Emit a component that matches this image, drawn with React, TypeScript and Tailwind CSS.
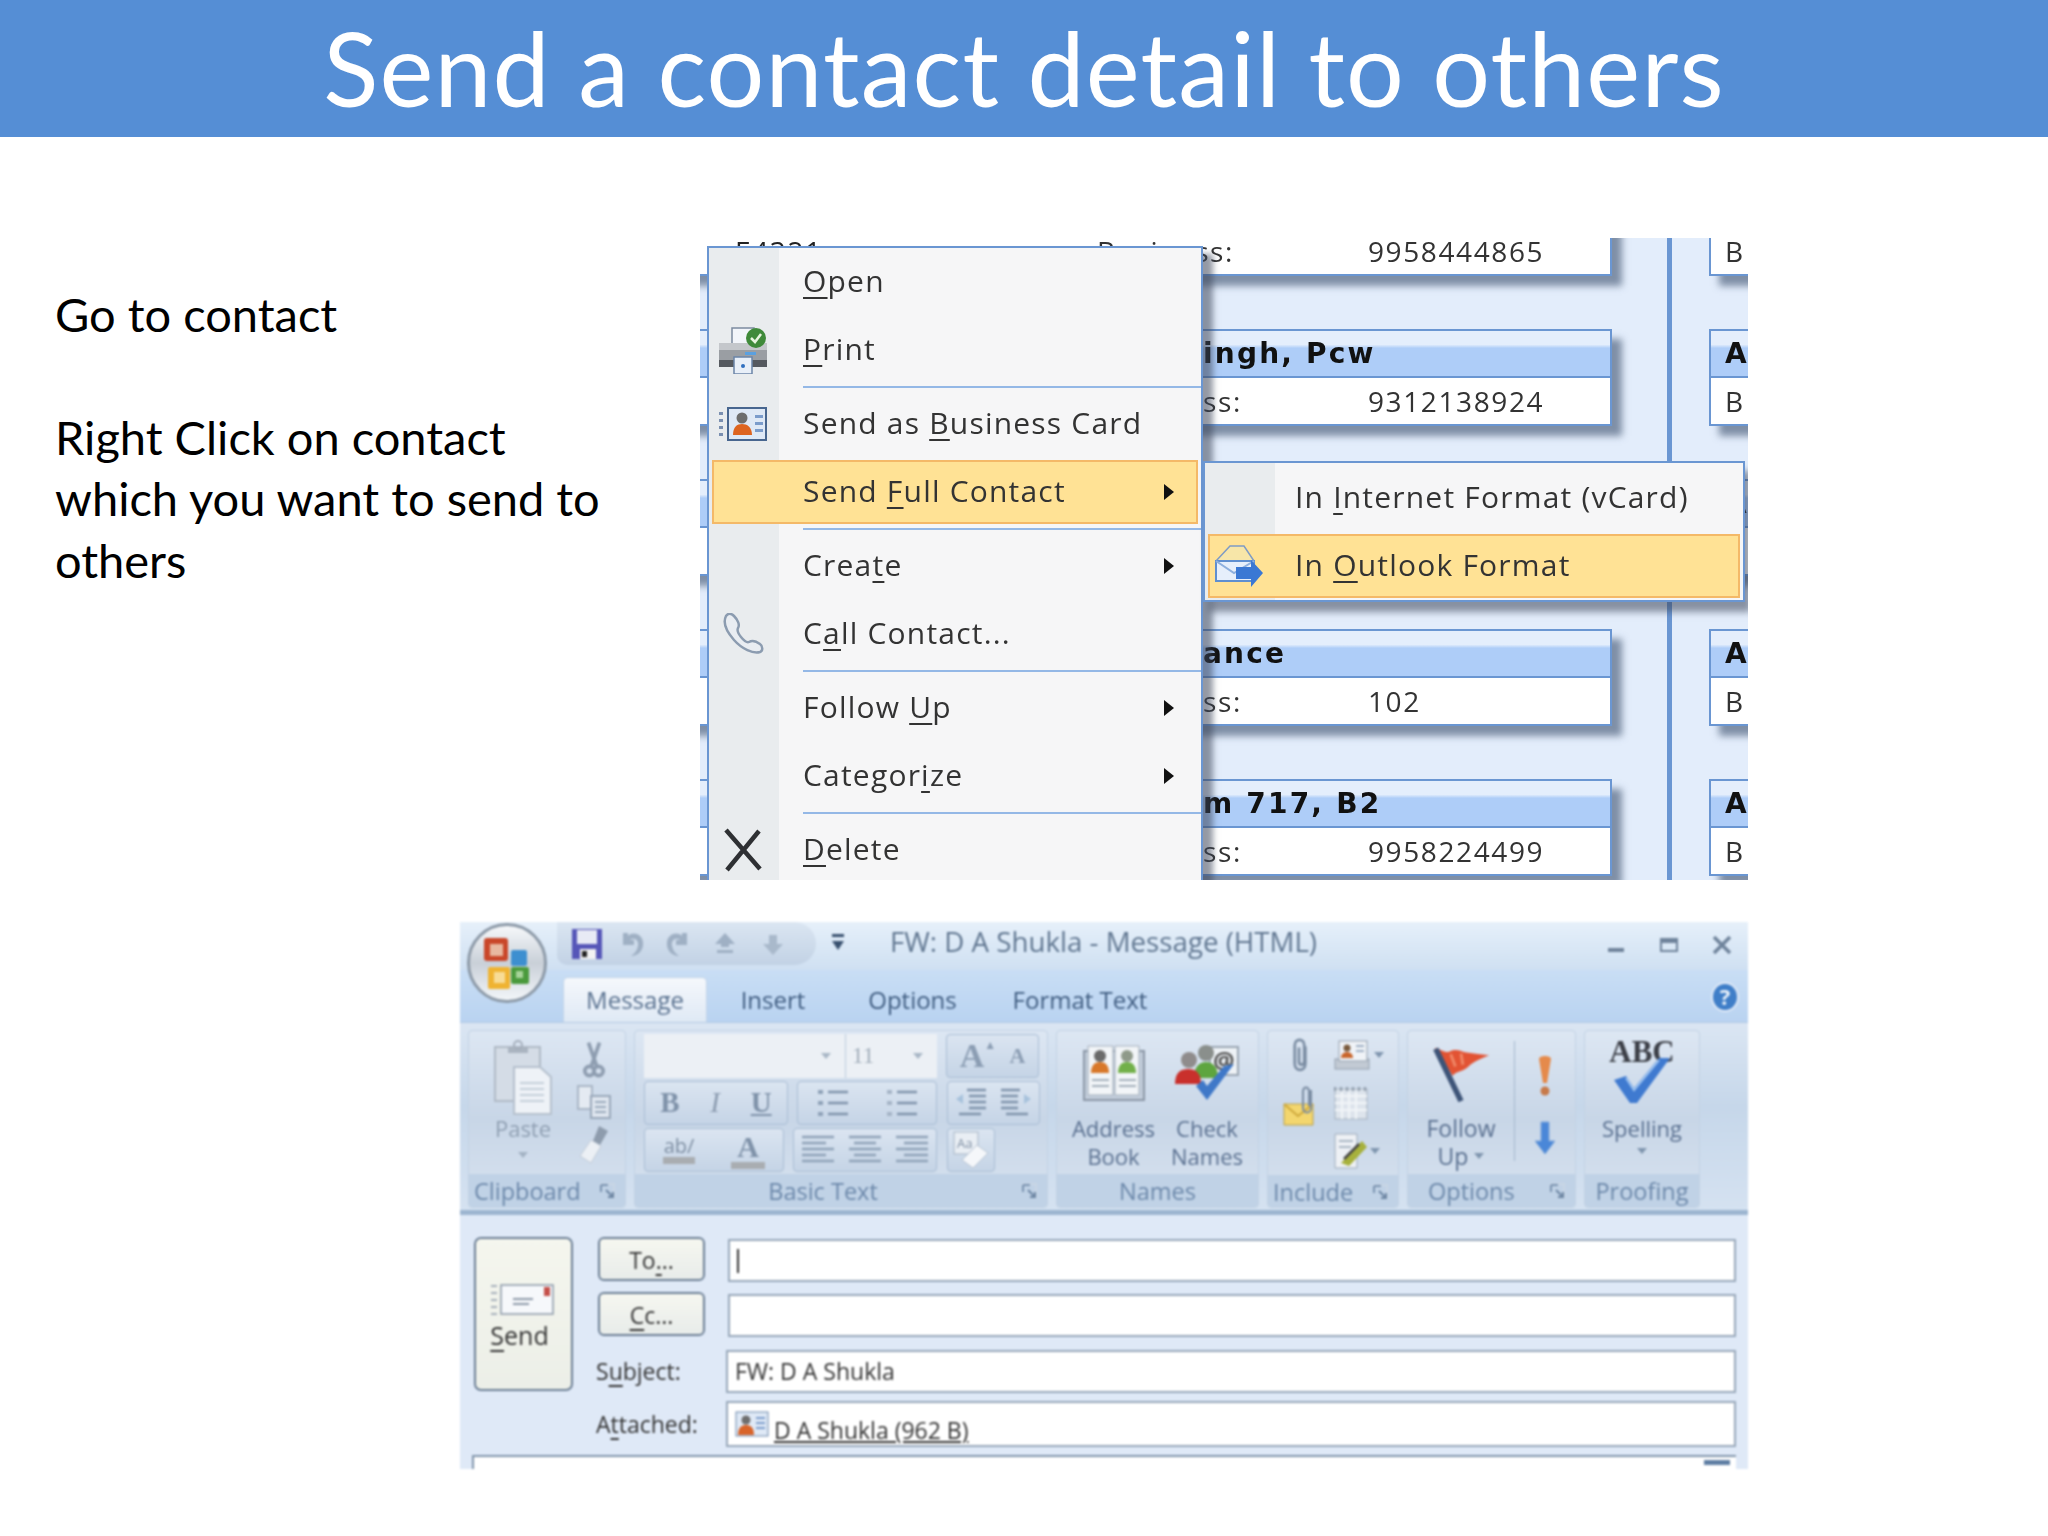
import React from "react";

const Tri = ({ cls = "fill-[#111]" }: { cls?: string }) => (
  <svg width="12" height="16" viewBox="0 0 12 16" className={cls}><path d="M1 0 L11 8 L1 16 Z" /></svg>
);
const Drop = ({ c = "#7f95ae" }: { c?: string }) => (
  <svg width="10" height="6" viewBox="0 0 10 6"><path d="M0 0H10L5 6Z" fill={c} /></svg>
);

const Mn = ({ children }: { children: React.ReactNode }) => (
  <span className="underline decoration-2 underline-offset-[5px]">{children}</span>
);

const PrinterIcon = () => (
  <svg width="50" height="48" viewBox="0 0 50 48">
    <path d="M14 2H36V22H14Z" fill="#f2f5fa" stroke="#7c8aa0" strokeWidth="1.5" />
    <path d="M1 17H49V37H1Z" fill="#9a9ea3" />
    <path d="M1 17H49V24H1Z" fill="#c4c7cb" />
    <path d="M27 26H38V29H27Z" fill="#5aa0e0" />
    <path d="M1 34H49V41H1Z" fill="#55595f" />
    <path d="M16 31H34V48H16Z" fill="#e8eff8" stroke="#6b85a8" strokeWidth="1.5" />
    <circle cx="25" cy="40" r="2" fill="#2f6fc0" />
    <circle cx="38" cy="12" r="10" fill="#3f8a3a" />
    <path d="M33 12L37 16L43 8" fill="none" stroke="#e8f5e0" strokeWidth="2.5" />
  </svg>
);
const CardIcon = () => (
  <svg width="48" height="34" viewBox="0 0 48 34">
    <g fill="#7a8fb0"><rect x="0" y="5" width="4" height="3" /><rect x="0" y="12" width="4" height="3" /><rect x="0" y="19" width="4" height="3" /><rect x="0" y="26" width="4" height="3" /></g>
    <rect x="9" y="1" width="38" height="32" fill="#dfe9f6" stroke="#48668f" strokeWidth="2" />
    <circle cx="23" cy="11" r="5.5" fill="#6d6d6d" />
    <path d="M14 28C14 20 18 17 23 17C28 17 33 20 33 28Z" fill="#dd6420" />
    <g fill="#7b9ccb"><rect x="36" y="8" width="8" height="3" /><rect x="36" y="15" width="8" height="3" /><rect x="36" y="22" width="8" height="3" /></g>
  </svg>
);
const PhoneIcon = () => (
  <svg width="42" height="42" viewBox="0 0 42 42" fill="none">
    <path d="M4 3C1 9 4 18 12 27C20 36 31 41 38 39C41 38 41 33 38 31C34 28 30 27 27 29C25 30 23 29 19 24C15 19 15 17 16 15C18 12 16 7 12 3C9 0 6 0 4 3Z" fill="#e9edf2" stroke="#8c9cb0" strokeWidth="2.5" />
  </svg>
);
const XIcon = () => (
  <svg width="40" height="44" viewBox="0 0 40 44"><path d="M3 2L37 41M36 3L4 42" stroke="#2e3033" strokeWidth="4.5" fill="none" /></svg>
);
const MailArrowIcon = () => (
  <svg width="50" height="46" viewBox="0 0 50 46">
    <path d="M2 18L16 3H30L40 18V38H2Z" fill="#f7e6a8" stroke="#7f9cc5" strokeWidth="1.5" />
    <path d="M2 18H40V38H2Z" fill="#e6effb" stroke="#5f8fd0" strokeWidth="2" />
    <path d="M2 18L20 30L40 18" fill="none" stroke="#8eb0de" strokeWidth="2" />
    <path d="M22 24H37V17L49 30L37 44V36H22Z" fill="#3a78d4" />
  </svg>
);

function Row({ icon, children, arrow, active, sub }: { icon?: React.ReactNode; children: React.ReactNode; arrow?: boolean; active?: boolean; sub?: boolean }) {
  return (
    <div className="h-[68px] px-[3px] flex items-center">
      <div className={active ? "w-full h-[64px] flex items-center border-2 border-[#f4b968] bg-[#ffe295]" : "w-full h-[64px] flex items-center border-2 border-transparent"}>
        <div className="w-[58px] flex items-center justify-center">{icon}</div>
        <span className={sub ? "ml-[27px] pb-[3px] tracking-[1.2px] text-[30px] leading-none text-[#333]" : "ml-[31px] pb-[3px] tracking-[1.2px] text-[30px] leading-none text-[#333]"}>{children}</span>
        {arrow && <span className="ml-auto mr-[21px] flex"><Tri /></span>}
      </div>
    </div>
  );
}
const Sep = () => (
  <div className="h-[6px] pl-[94px] flex items-center"><div className="h-[2px] w-full bg-[#94b8e6]" /></div>
);

const headers = [
  { h: "", l: "", n: "9958444865", first: true },
  { h: "ingh, Pcw", l: "ss:", n: "9312138924" },
  { h: "", l: "ss:", n: "" },
  { h: "ance", l: "ss:", n: "102" },
  { h: "m 717, B2", l: "ss:", n: "9958224499" },
];

function ContactCard({ h, l, n, first }: { h: string; l: string; n: string; first?: boolean }) {
  return (
    <div className="w-[962px] h-[97px] shrink-0 border-2 border-[#6a96d2] bg-white shadow-[10px_10px_7px_rgba(60,80,110,0.6)] flex flex-col">
      <div className="h-[47px] border-b-2 border-[#6a96d2] bg-[linear-gradient(to_bottom,#e4eefc_0%,#e4eefc_30%,#aecdf8_38%,#aecdf8_100%)] pl-[551px] flex items-center font-['DejaVu_Sans',sans-serif] font-bold text-[28px] tracking-[2.2px] text-[#111]">
        {h}
      </div>
      <div className="flex-1 flex items-center font-['Open_Sans',sans-serif] text-[28px] tracking-[1.6px] text-[#333]">
        {first ? (
          <>
            <span className="ml-[83px] w-[245px] text-[#222]">E4321</span>
            <span className="w-[54px] h-[10px] self-start bg-[linear-gradient(to_right,#aeb6c2,#dfe8f5)]" />
            <span className="w-[4px] h-[10px] self-start bg-[#6a96d2]" />
            <span className="w-[38px] h-[10px] self-start bg-[#dbe7f8]" />
            <span className="w-[2px] h-[10px] self-start bg-[#6a96d2]" />
            <span className="ml-[19px] w-[271px]">Business:</span>
          </>
        ) : (
          <span className="pl-[551px] w-[716px]">{l}</span>
        )}
        <span>{n}</span>
      </div>
    </div>
  );
}
function SideCard({ first }: { first?: boolean }) {
  return (
    <div className="w-[70px] h-[97px] shrink-0 border-2 border-[#6a96d2] bg-white shadow-[10px_10px_7px_rgba(60,80,110,0.6)] flex flex-col">
      <div className="h-[47px] border-b-2 border-[#6a96d2] bg-[linear-gradient(to_bottom,#e4eefc_0%,#e4eefc_30%,#aecdf8_38%,#aecdf8_100%)] pl-[14px] flex items-center font-['DejaVu_Sans',sans-serif] font-bold text-[28px] text-[#111]">
        {first ? "" : "A"}
      </div>
      <div className="flex-1 pl-[14px] flex items-center font-['Open_Sans',sans-serif] text-[28px] text-[#333]">B</div>
    </div>
  );
}

function ContactsShot() {
  return (
    <div className="relative w-[1048px] h-[642px] overflow-hidden bg-[#e3edfb] blur-[0.6px] font-['Open_Sans',sans-serif]">
      <div className="flex -mt-[59px]">
        <div className="-ml-[50px] shrink-0 flex flex-col gap-[53px]">
          {headers.map((c, i) => <ContactCard key={i} {...c} />)}
        </div>
        <div className="ml-[55px] shrink-0 w-[5px] h-[800px] bg-[#6a96d2]" />
        <div className="ml-[37px] shrink-0 flex flex-col gap-[53px]">
          {headers.map((c, i) => <SideCard key={i} first={i === 0} />)}
        </div>
      </div>

      <div className="absolute left-[7px] top-[8px] w-[496px] h-[700px] border-2 border-[#6a96d2] shadow-[10px_8px_6px_rgba(60,70,90,0.55)] bg-[linear-gradient(to_right,#e9ecee_70px,#f6f6f7_70px)] z-10">
        <Row><Mn>O</Mn>pen</Row>
        <Row icon={<PrinterIcon />}><Mn>P</Mn>rint</Row>
        <Sep />
        <Row icon={<CardIcon />}>Send as <Mn>B</Mn>usiness Card</Row>
        <Row active arrow>Send <Mn>F</Mn>ull Contact</Row>
        <Sep />
        <Row arrow>Crea<Mn>t</Mn>e</Row>
        <Row icon={<PhoneIcon />}>C<Mn>a</Mn>ll Contact...</Row>
        <Sep />
        <Row arrow>Follow <Mn>U</Mn>p</Row>
        <Row arrow>Categor<Mn>i</Mn>ze</Row>
        <Sep />
        <Row icon={<XIcon />}><Mn>D</Mn>elete</Row>
      </div>

      <div className="absolute left-[503px] top-[223px] w-[542px] h-[141px] border-2 border-[#6a96d2] shadow-[6px_10px_7px_rgba(60,70,90,0.55)] pt-[1px] bg-[linear-gradient(to_right,#e9ecee_70px,#f6f6f7_70px)] z-20">
        <Row sub>In <Mn>I</Mn>nternet Format (vCard)</Row>
        <Row sub active icon={<MailArrowIcon />}>In <Mn>O</Mn>utlook Format</Row>
      </div>
    </div>
  );
}

/* ---------- Ribbon icons ---------- */
const Orb = () => (
  <svg width="82" height="82" viewBox="0 0 82 82">
    <defs>
      <linearGradient id="orbg" x1="0" y1="0" x2="0" y2="1"><stop offset="0" stopColor="#f8fafc" /><stop offset="0.5" stopColor="#c9d0d8" /><stop offset="1" stopColor="#f4f7fa" /></linearGradient>
    </defs>
    <circle cx="41" cy="41" r="38.5" fill="url(#orbg)" stroke="#8d9aa8" strokeWidth="3" />
    <rect x="18" y="16" width="24" height="23" rx="3" fill="#c9472a" />
    <rect x="24" y="22" width="13" height="12" fill="#e8b8a0" />
    <rect x="45" y="28" width="16" height="16" rx="2" fill="#3d8fd0" />
    <rect x="22" y="45" width="22" height="22" rx="2" fill="#efb332" />
    <rect x="28" y="50" width="11" height="11" fill="#f8dc96" />
    <rect x="45" y="45" width="18" height="17" rx="2" fill="#4a9a3c" />
    <rect x="50" y="49" width="7" height="7" fill="#a8d49a" />
  </svg>
);
const SaveIcon = () => (
  <svg width="32" height="32" viewBox="0 0 32 32"><path d="M1 1H31V31H1Z" fill="#5656b8" /><path d="M6 2H26V16H6Z" fill="#e8eaf5" /><path d="M9 21H25V31H9Z" fill="#f2f2f2" /><path d="M11 23H16V29H11Z" fill="#222" /></svg>
);
const UndoIcon = ({ flip }: { flip?: boolean }) => (
  <svg width="26" height="30" viewBox="0 0 26 30" className={flip ? "-scale-x-100" : ""}><path d="M4 4V16H15V11H11C15 8 20 11 19 17C18 22 15 25 12 27C20 27 25 20 24 13C23 5 14 2 9 7L9 4Z" fill="#9fb0c4" /></svg>
);
const UpIcon = () => (<svg width="26" height="26" viewBox="0 0 26 26"><path d="M13 2L23 13H17V16H9V13H3Z M5 19H21V22H5Z" fill="#9fb0c4" /></svg>);
const DownIcon = () => (<svg width="26" height="26" viewBox="0 0 26 26"><path d="M13 24L23 13H17V4H9V13H3Z" fill="#a9b9cb" /></svg>);
const QatMore = () => (<svg width="14" height="20" viewBox="0 0 14 20"><path d="M1 1H13V4H1Z M1 8H13L7 17Z" fill="#39516f" /></svg>);
const Launcher = () => (
  <svg width="16" height="16" viewBox="0 0 16 16" fill="none"><path d="M1 1H15V15" stroke="#c9d6e5" strokeWidth="2" /><path d="M2 2H9" stroke="#7a93b0" strokeWidth="2" /><path d="M2 2V9" stroke="#7a93b0" strokeWidth="2" /><path d="M7 7L14 14M14 9V14H9" stroke="#6d86a3" strokeWidth="2" /></svg>
);
const PasteIcon = () => (
  <svg width="58" height="76" viewBox="0 0 58 76">
    <path d="M1 8H46V62H1Z" fill="#d4dce6" stroke="#b0bac6" strokeWidth="2" />
    <path d="M14 8H34V14H14Z" fill="#aab4c0" /><circle cx="24" cy="6" r="4" fill="none" stroke="#a5afbc" strokeWidth="2" />
    <path d="M20 28H46L57 38V75H20Z" fill="#eef2f7" stroke="#b5c0cd" strokeWidth="2" />
    <path d="M26 44H50M26 50H50M26 56H50M26 62H50" stroke="#c5cfda" strokeWidth="2" />
  </svg>
);
const CutIcon = () => (<svg width="22" height="38" viewBox="0 0 24 40" fill="none" stroke="#8e9db0" strokeWidth="4"><path d="M6 1L15 27M18 1L9 27" /><circle cx="7" cy="32" r="5" /><circle cx="17" cy="32" r="5" /></svg>);
const CopyIcon = () => (<svg width="34" height="34" viewBox="0 0 34 34"><path d="M1 1H15V24H1Z" fill="#e4eaf2" stroke="#a9b6c6" strokeWidth="2" /><path d="M14 11H33V33H14Z" fill="#dfe6ef" stroke="#99a8ba" strokeWidth="2" /><path d="M18 17H29M18 22H29M18 27H29" stroke="#9aaabc" strokeWidth="2" /></svg>);
const BrushIcon = () => (<svg width="30" height="40" viewBox="0 0 30 40"><path d="M20 1L29 6L21 20L14 16Z" fill="#8e9cad" /><path d="M12 15L22 21L12 38L1 31Z" fill="#ecf0f5" stroke="#c2ccd8" strokeWidth="1" /></svg>);
const Lines = ({ w = 32, rows }: { w?: number; rows: [number, number, number][] }) => (
  <svg width={w} height="34" viewBox={`0 0 ${w} 34`} stroke="#8fa2b8" strokeWidth="2.5">
    {rows.map((r, i) => <line key={i} x1={r[0]} x2={r[1]} y1={r[2]} y2={r[2]} />)}
  </svg>
);
const BulletIcon = ({ n }: { n?: boolean }) => (
  <svg width="32" height="34" viewBox="0 0 32 34">
    <g fill={n ? "#a5b4c6" : "#8fa2b8"}><rect x="1" y="4" width="5" height="4" /><rect x="1" y="15" width="5" height="4" /><rect x="1" y="26" width="5" height="4" /></g>
    <g stroke="#7f93ab" strokeWidth="2.5"><line x1="11" x2="31" y1="6" y2="6" /><line x1="11" x2="31" y1="17" y2="17" /><line x1="11" x2="31" y1="28" y2="28" /></g>
  </svg>
);
const IndentIcon = ({ flip }: { flip?: boolean }) => (
  <svg width="32" height="34" viewBox="0 0 32 34" className={flip ? "-scale-x-100" : ""}>
    <g stroke="#7f93ab" strokeWidth="2.5"><line x1="12" x2="31" y1="4" y2="4" /><line x1="14" x2="31" y1="10" y2="10" /><line x1="14" x2="31" y1="16" y2="16" /><line x1="14" x2="31" y1="22" y2="22" /><line x1="4" x2="26" y1="28" y2="28" /></g>
    <path d="M1 13L8 8V18Z" fill="#a7c2dc" />
  </svg>
);
const EraserIcon = () => (
  <svg width="36" height="38" viewBox="0 0 36 38">
    <rect x="1" y="1" width="24" height="22" fill="#e9eef4" stroke="#a8b6c6" />
    <text x="4" y="17" fontSize="13" fontFamily="Open Sans" fill="#7f8fa3">Aa</text>
    <path d="M24 14L35 22L20 37L9 29Z" fill="#f5f7fa" stroke="#b8c4d2" />
  </svg>
);
const AddressBookIcon = () => (
  <svg width="62" height="56" viewBox="0 0 62 56">
    <path d="M1 6H61V55H1Z" fill="#c2cddb" stroke="#8b97a6" strokeWidth="2" />
    <path d="M5 1H30V50H5Z M32 1H56V50H32Z" fill="#f2f5f8" stroke="#a4afbb" />
    <circle cx="17" cy="11" r="6" fill="#6a6a6a" /><path d="M8 28C8 20 12 17 17 17C22 17 26 20 26 28Z" fill="#d8782a" />
    <circle cx="44" cy="11" r="6" fill="#8f9a8a" /><path d="M35 28C35 20 39 17 44 17C49 17 53 20 53 28Z" fill="#72b04a" />
    <path d="M9 35H26M9 41H26M36 35H53M36 41H53" stroke="#a4afbb" strokeWidth="2" />
  </svg>
);
const CheckNamesIcon = () => (
  <svg width="66" height="62" viewBox="0 0 66 62">
    <rect x="36" y="5" width="28" height="28" fill="#eef2f6" stroke="#9aa6b3" strokeWidth="2" />
    <text x="39" y="27" fontSize="24" fontFamily="Open Sans" fontWeight="700" fill="#555">@</text>
    <circle cx="32" cy="11" r="8" fill="#8a8f8c" /><path d="M20 36C20 25 25 20 32 20C39 20 44 25 44 36Z" fill="#5ea53f" />
    <circle cx="15" cy="18" r="8" fill="#8f8c8c" /><path d="M1 42C1 30 7 27 14 27C22 27 27 31 27 42Z" fill="#c9302c" />
    <path d="M22 44L33 58L60 22L50 24L33 44L29 38Z" fill="#3f78c8" />
  </svg>
);
const ClipIcon = ({ s = 32 }: { s?: number }) => (
  <svg width={s * 0.65} height={s} viewBox="0 0 20 32" fill="none" stroke="#7a8ca2" strokeWidth="2.5"><path d="M15 8V24C15 32 5 32 5 24V7C5 0 14 0 14 7V22C14 26 9 26 9 22V9" /></svg>
);
const VCardIcon = () => (
  <svg width="36" height="30" viewBox="0 0 36 30"><rect x="1" y="19" width="34" height="10" fill="#c2cad4" stroke="#93a0ae" /><rect x="5" y="1" width="28" height="20" fill="#f0f3f7" stroke="#93a0ae" /><circle cx="13" cy="8" r="3.5" fill="#7a5a3c" /><path d="M7 18C7 14 10 12 13 12C16 12 19 14 19 18Z" fill="#c9662c" /><path d="M22 6H30M22 11H30" stroke="#9dafc4" strokeWidth="2" /></svg>
);
const MailClipIcon = () => (
  <svg width="34" height="40" viewBox="0 0 34 40"><path d="M1 18H30V39H1Z" fill="#f3d66e" stroke="#b9a14c" /><path d="M1 18L15 30L30 18" fill="none" stroke="#cfa93c" strokeWidth="2" /><g transform="translate(18 0)"><path d="M10 4V22C10 28 2 28 2 22V6C2 0 8 0 8 6V20" fill="none" stroke="#7a8ca2" strokeWidth="2" /></g></svg>
);
const CalIcon = () => (
  <svg width="34" height="34" viewBox="0 0 34 34"><rect x="1" y="3" width="32" height="30" fill="#dde4ec" stroke="#a3afbd" /><path d="M1 1V5M7 1V5M13 1V5M19 1V5M25 1V5M31 1V5" stroke="#8e9bab" strokeWidth="2" /><path d="M1 10H33M1 17H33M1 24H33M8 6V33M15 6V33M22 6V33" stroke="#f2f5f8" strokeWidth="2" /></svg>
);
const SigIcon = () => (
  <svg width="34" height="36" viewBox="0 0 34 36"><path d="M1 1H23V35H1Z" fill="#eef1f5" stroke="#9dabba" /><path d="M5 8H19M5 14H17" stroke="#a9b6c4" strokeWidth="2" /><path d="M7 30L28 8L33 14L15 33Z" fill="#a7b13c" /><path d="M10 26L25 11" stroke="#444" strokeWidth="2.5" /></svg>
);
const FlagIcon = () => (
  <svg width="58" height="58" viewBox="0 0 62 62">
    <path d="M3 3C10 5 14 9 19 7C26 3 31 7 37 8C45 9 53 10 61 11C52 15 45 17 39 23C33 29 27 27 22 33L3 3Z" fill="#e25333" />
    <path d="M20 10L25 23M31 9L33 21" stroke="#f08968" strokeWidth="3" />
    <path d="M4 4L31 60" stroke="#3d5478" strokeWidth="6" />
  </svg>
);
const Bang = () => (
  <svg width="16" height="42" viewBox="0 0 16 42"><path d="M2 4C2 0 14 0 14 4L10 28H6Z" fill="#e58a4b" /><circle cx="8" cy="36" r="4.5" fill="#c77a4a" /></svg>
);
const LowArrow = () => (
  <svg width="20" height="34" viewBox="0 0 20 34"><path d="M6 1H14V20H20L10 33L0 20H6Z" fill="#4a87d8" stroke="#7ea5d8" /></svg>
);
const SpellCheck = () => (
  <svg width="58" height="46" viewBox="0 0 58 46"><path d="M1 22L13 18L21 30L46 0L57 0L24 45H17Z" fill="#3f7ad0" /><path d="M13 20L21 32L46 2" fill="none" stroke="#9dc3f0" strokeWidth="2" /></svg>
);
const SendEnv = () => (
  <svg width="64" height="32" viewBox="0 0 64 32">
    <g fill="#a7b0bb"><rect x="0" y="1" width="6" height="2" /><rect x="0" y="8" width="6" height="2" /><rect x="0" y="15" width="6" height="2" /><rect x="0" y="22" width="6" height="2" /><rect x="0" y="29" width="6" height="2" /></g>
    <rect x="10" y="1" width="52" height="29" fill="#f6f8fb" stroke="#8b98a8" strokeWidth="1.5" />
    <rect x="53" y="3" width="6" height="9" fill="#c5504a" />
    <path d="M22 15H42M22 20H38" stroke="#8d99a8" strokeWidth="2" />
  </svg>
);

const Group = ({ w, label, launcher, children, labelCls = "justify-center" }: { w: string; label: string; launcher?: boolean; children: React.ReactNode; labelCls?: string }) => (
  <div className={`${w} h-[178px] rounded-[4px] border border-[#c2d2e4] flex flex-col bg-[linear-gradient(to_bottom,#dde7f3_0%,#c8d6e7_50%,#d8e3f0_100%)] font-['Open_Sans',sans-serif] overflow-hidden`}>
    <div className="h-[145px] flex">{children}</div>
    <div className={`h-[33px] pt-[2px] bg-[#c0d2e6] relative flex items-center ${labelCls} text-[23.5px] text-[#6c88aa]`}>
      <span>{label}</span>
      {launcher && <span className="absolute right-[10px] top-[9px] flex"><Launcher /></span>}
    </div>
  </div>
);
const Btns = ({ w, cls = "justify-around", children }: { w: string; cls?: string; children: React.ReactNode }) => (
  <div className={`${w} h-[44px] flex items-center ${cls} rounded-[4px] border border-[#a9bdd4] bg-[linear-gradient(to_bottom,#dbe5f1,#c5d4e6)]`}>{children}</div>
);

function OutlookShot() {
  return (
    <div className="relative w-[1288px] h-[547px] overflow-hidden blur-[0.8px] bg-[#dfe9f7] font-['Open_Sans',sans-serif]">
      {/* Title bar */}
      <div className="h-[48px] flex items-start bg-[linear-gradient(to_bottom,#e6f0fa,#cfe0f2)]">
        <div className="ml-[97px] w-[259px] h-[43px] rounded-r-[30px] rounded-bl-[14px] bg-[linear-gradient(to_bottom,#dbe6f2,#c2d2e5)] flex items-center">
          <span className="ml-[14px] flex"><SaveIcon /></span>
          <span className="ml-[16px] flex"><UndoIcon /></span>
          <span className="ml-[20px] flex"><UndoIcon flip /></span>
          <span className="ml-[21px] flex"><UpIcon /></span>
          <span className="ml-[22px] flex"><DownIcon /></span>
        </div>
        <span className="ml-[15px] mt-[11px] flex"><QatMore /></span>
        <span className="ml-[45px] -mt-[3px] text-[27.7px] leading-[44px] text-[#617791] whitespace-nowrap">FW: D A Shukla - Message (HTML)</span>
        <div className="ml-auto flex h-[46px]">
          <span className="w-[53px] flex items-center justify-center"><span className="mt-[10px] w-[16px] h-[4px] bg-[#6f839b]" /></span>
          <span className="w-[53px] flex items-center justify-center"><span className="w-[18px] h-[14px] border-2 border-t-[5px] border-[#6f839b]" /></span>
          <span className="w-[53px] flex items-center justify-center">
            <svg width="20" height="20" viewBox="0 0 20 20"><path d="M2 2L18 18M18 2L2 18" stroke="#6f839b" strokeWidth="3.5" /></svg>
          </span>
        </div>
      </div>
      <div className="absolute left-[6px] top-[0px] z-10"><Orb /></div>

      {/* Tabs */}
      <div className="h-[53px] flex items-end pl-[103px] pr-[9px] border-b border-[#b3c9e2] bg-[linear-gradient(to_bottom,#c9def5,#b9d3f1)] text-[24px] text-[#3f5c80]">
        <div className="w-[144px] h-[45px] rounded-t-[5px] border border-b-0 border-[#c2d4e8] bg-[linear-gradient(to_bottom,#f5f8fc,#dfe9f5)] flex items-center justify-center text-[#59718f]">Message</div>
        <div className="w-[132px] h-[45px] flex items-center justify-center">Insert</div>
        <div className="w-[147px] h-[45px] flex items-center justify-center">Options</div>
        <div className="w-[188px] h-[45px] flex items-center justify-center">Format Text</div>
        <div className="ml-auto self-center flex mt-[2px]">
          <svg width="28" height="30" viewBox="0 0 28 30">
            <ellipse cx="14" cy="15" rx="13" ry="14" fill="#3f7ec8" stroke="#dfe9f7" strokeWidth="2" />
            <text x="14" y="23" textAnchor="middle" fontSize="22" fontWeight="700" fontFamily="Open Sans" fill="#eef5fc">?</text>
          </svg>
        </div>
      </div>

      {/* Ribbon */}
      <div className="h-[192px] pt-[7px] pl-[8px] flex gap-[8px] bg-[linear-gradient(to_bottom,#dbe6f3,#c6d7ea_45%,#d5e2f1)] border-b-[5px] border-[#9cb5d0]">
        <Group w="w-[158px]" label="Clipboard" launcher labelCls="justify-start pl-[5px]">
          <div className="w-[108px] flex flex-col items-center pt-[8px]">
            <PasteIcon />
            <span className="-mt-[2px] text-[22px] leading-[30px] text-[#8f9fb2]">Paste</span>
            <span className="mt-[9px] flex"><Drop c="#a3b2c3" /></span>
          </div>
          <div className="w-[34px] flex flex-col items-center pt-[10px] gap-[6px]">
            <CutIcon /><CopyIcon /><BrushIcon />
          </div>
        </Group>

        <Group w="w-[414px]" label="Basic Text" launcher labelCls="justify-center pr-[36px]">
          <div className="pl-[9px] pt-[3px] flex flex-col gap-[3px]">
            <div className="flex">
              <div className="w-[202px] h-[44px] bg-[#ecf0f5] border-r border-[#bccbdc] flex items-center justify-end pr-[14px]"><Drop c="#a9b7c6" /></div>
              <div className="w-[91px] h-[44px] bg-[#ecf0f5] flex items-center justify-between px-[6px] pr-[14px] font-['Liberation_Serif',serif] text-[23px] text-[#a2aebb]">11<Drop c="#a9b7c6" /></div>
              <div className="ml-[9px]"><Btns w="w-[93px]">
                <span className="relative font-['Liberation_Serif',serif] font-bold text-[34px] leading-none text-[#8b9db3]">A<span className="absolute -right-[12px] top-0 text-[12px]">▲</span></span>
                <span className="font-['Liberation_Serif',serif] font-bold text-[22px] leading-none text-[#8b9db3]">A</span>
              </Btns></div>
            </div>
            <div className="flex">
              <Btns w="w-[144px]">
                <span className="font-['Liberation_Serif',serif] font-bold text-[29px] text-[#7f92a9]">B</span>
                <span className="font-['Liberation_Serif',serif] italic text-[29px] text-[#8c9cb0]">I</span>
                <span className="font-['Liberation_Serif',serif] font-bold underline text-[29px] text-[#7f92a9]">U</span>
              </Btns>
              <div className="ml-[9px]"><Btns w="w-[140px]"><BulletIcon /><BulletIcon n /></Btns></div>
              <div className="ml-[10px]"><Btns w="w-[93px]"><IndentIcon /><IndentIcon flip /></Btns></div>
            </div>
            <div className="flex">
              <Btns w="w-[140px]">
                <span className="flex flex-col items-center leading-none text-[20px] text-[#7f8fa3]">ab/<span className="mt-[1px] w-[32px] h-[7px] bg-[#a9adb1]" /></span>
                <span className="flex flex-col items-center font-['Liberation_Serif',serif] font-bold text-[30px] leading-[30px] text-[#7f92a9]">A<span className="w-[34px] h-[7px] bg-[#a9adb1]" /></span>
              </Btns>
              <div className="ml-[9px]"><Btns w="w-[144px]">
                <Lines rows={[[0, 32, 4], [0, 24, 10], [0, 32, 16], [0, 24, 22], [0, 32, 28]]} />
                <Lines rows={[[0, 32, 4], [5, 27, 10], [0, 32, 16], [5, 27, 22], [0, 32, 28]]} />
                <Lines rows={[[0, 32, 4], [8, 32, 10], [0, 32, 16], [8, 32, 22], [0, 32, 28]]} />
              </Btns></div>
              <div className="ml-[10px]"><Btns w="w-[48px]" cls="justify-center"><EraserIcon /></Btns></div>
            </div>
          </div>
        </Group>

        <Group w="w-[203px]" label="Names">
          <div className="w-[113px] flex flex-col items-center text-[22px] leading-[28px] text-[#5a7090]">
            <div className="h-[83px] flex items-center"><AddressBookIcon /></div>
            <span>Address</span><span>Book</span>
          </div>
          <div className="w-[74px] flex flex-col items-center text-[22px] leading-[28px] text-[#5a7090]">
            <div className="h-[83px] flex items-center"><CheckNamesIcon /></div>
            <span>Check</span><span>Names</span>
          </div>
        </Group>

        <Group w="w-[132px]" label="Include" launcher labelCls="justify-start pl-[5px]">
          <div className="grid grid-cols-[64px_67px] grid-rows-[48px_48px_48px]">
            <div className="flex items-center justify-center"><ClipIcon s={34} /></div>
            <div className="flex items-center gap-[4px] pl-[2px]"><VCardIcon /><Drop /></div>
            <div className="flex items-center justify-center pt-[6px]"><MailClipIcon /></div>
            <div className="flex items-center pl-[2px]"><CalIcon /></div>
            <div />
            <div className="flex items-center gap-[2px] pl-[2px]"><SigIcon /><Drop /></div>
          </div>
        </Group>

        <Group w="w-[169px]" label="Options" launcher labelCls="justify-start pl-[20px]">
          <div className="w-[106px] flex flex-col items-center text-[23px] leading-[28px] text-[#5a7090]">
            <div className="h-[83px] flex items-start pt-[14px]"><FlagIcon /></div>
            <span>Follow</span>
            <span className="flex items-center gap-[6px]">Up<Drop /></span>
          </div>
          <div className="w-[1px] h-[120px] mt-[10px] bg-[#a4b7cc]" />
          <div className="w-[60px] flex flex-col items-center pt-[24px] gap-[24px]">
            <Bang /><LowArrow />
          </div>
        </Group>

        <Group w="w-[116px]" label="Proofing">
          <div className="w-full flex flex-col items-center text-[22px] leading-[28px] text-[#5a7090]">
            <div className="h-[83px] flex flex-col items-center pt-[5px]">
              <span className="font-['Liberation_Serif',serif] font-bold text-[31px] leading-[32px] text-[#3c3f47]">ABC</span>
              <span className="-mt-[10px] flex"><SpellCheck /></span>
            </div>
            <span>Spelling</span>
            <span className="mt-[6px] flex"><Drop /></span>
          </div>
        </Group>
      </div>

      {/* Compose */}
      <div className="pl-[14px] pr-[12px] pt-[22px] flex text-[24px] text-[#333]">
        <div className="w-[99px] h-[154px] rounded-[7px] border-2 border-[#6c7f95] bg-[linear-gradient(to_bottom,#f5f6ee,#ecefe8)] flex flex-col items-center pt-[45px] pr-[2px]">
          <SendEnv />
          <span className="mt-[3px] -ml-[6px] text-[25px] leading-[32px]"><Mn>S</Mn>end</span>
        </div>
        <div className="ml-[25px] flex-1 flex flex-col">
          <div className="flex h-[44px]">
            <div className="w-[107px] h-[44px] pt-[3px] rounded-[6px] border-2 border-[#6c7f95] bg-[linear-gradient(to_bottom,#f6f7f0,#e8ecea)] flex items-center justify-center text-[23px]">To<Mn>.</Mn>..</div>
            <div className="ml-[23px] flex-1 h-[43px] mt-[2px] bg-white border-2 border-[#98a8ba] flex items-center pl-[7px]"><span className="w-[2px] h-[24px] bg-[#333]" /></div>
          </div>
          <div className="flex h-[44px] mt-[11px]">
            <div className="w-[107px] h-[44px] pt-[3px] rounded-[6px] border-2 border-[#6c7f95] bg-[linear-gradient(to_bottom,#f6f7f0,#e8ecea)] flex items-center justify-center text-[23px]"><Mn>C</Mn>c...</div>
            <div className="ml-[23px] flex-1 h-[43px] mt-[2px] bg-white border-2 border-[#98a8ba]" />
          </div>
          <div className="flex h-[43px] mt-[14px] items-center">
            <span className="w-[130px] -ml-[2px] pr-[2px] text-[23px]">S<Mn>u</Mn>bject:</span>
            <div className="flex-1 h-[43px] bg-white border-2 border-[#98a8ba] flex items-center pl-[7px] text-[23px]">FW: D A Shukla</div>
          </div>
          <div className="flex h-[46px] mt-[8px] items-center">
            <span className="w-[130px] -ml-[2px] pr-[2px] text-[23px]">A<Mn>t</Mn>tached:</span>
            <div className="flex-1 h-[46px] bg-white border-2 border-[#98a8ba] flex items-start pl-[7px] pt-[9px] text-[23px]">
              <svg width="34" height="26" viewBox="0 0 34 26" className="mt-[-1px]"><rect x="1" y="1" width="32" height="24" fill="#dfe9f6" stroke="#6f8aac" /><circle cx="11" cy="9" r="4.5" fill="#6e6e6e" /><path d="M3 24C3 16 7 14 11 14C15 14 19 16 19 24Z" fill="#d8642a" /><path d="M21 7H30M21 12H30M21 17H30" stroke="#7b9ccb" strokeWidth="2" /></svg>
              <span className="ml-[5px] underline decoration-2 underline-offset-2 whitespace-nowrap leading-[26px] mt-[5px]">D A Shukla (962 B)</span>
            </div>
          </div>
        </div>
      </div>
      <div className="relative mt-[8px] mx-[12px] h-[20px] bg-white border-t-2 border-l-2 border-[#8296ac]">
        <span className="absolute right-[6px] top-[3px] w-[26px] h-[5px] bg-[#5f7ea3]" />
      </div>
    </div>
  );
}

export default function App() {
  return (
    <div className="w-[2048px] h-[1536px] bg-white overflow-hidden font-['Lato',sans-serif]">
      <header className="h-[137px] bg-[#558ed5] flex items-center justify-center pb-[2px]">
        <h1 className="text-white text-[102px] tracking-[1.2px] leading-none whitespace-nowrap">Send a contact detail to others</h1>
      </header>
      <main className="flex pt-[101px]">
        <div className="w-[700px] pl-[55px] pt-[46px] text-[47px] leading-[61.4px] text-black">
          <p>Go to contact</p>
          <p className="mt-[61.4px]">Right Click on contact<br />which you want to send to<br />others</p>
        </div>
        <ContactsShot />
      </main>
      <div className="ml-[460px] mt-[42px]"><OutlookShot /></div>
    </div>
  );
}
